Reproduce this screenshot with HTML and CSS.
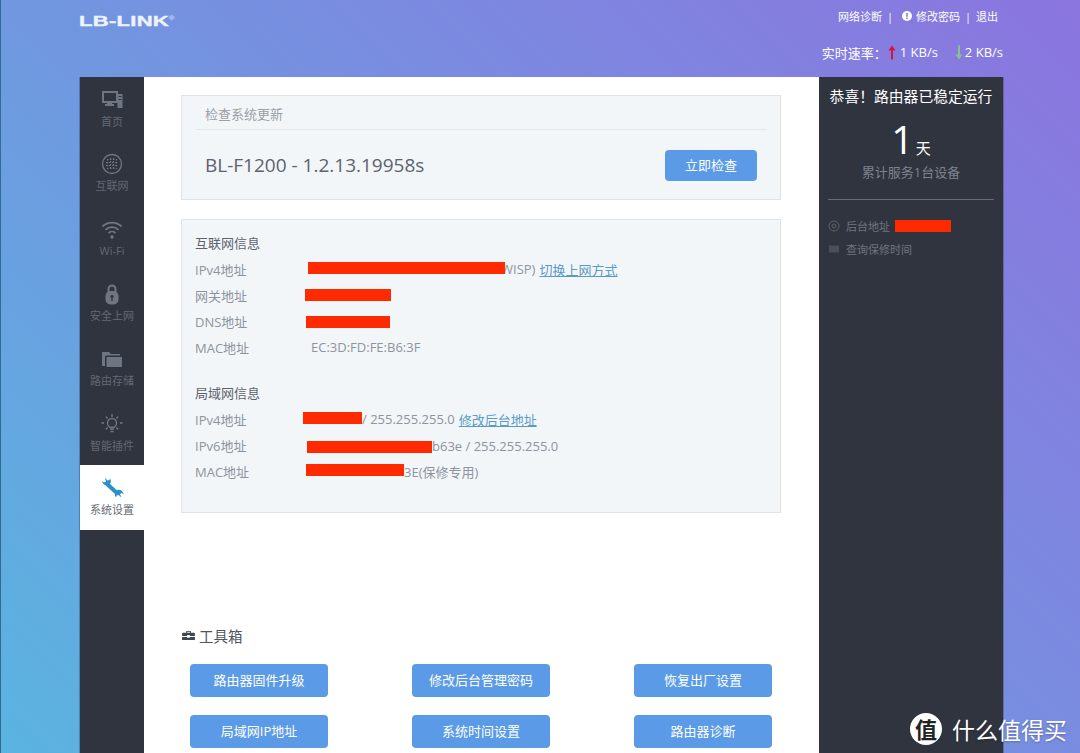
FILE: index.html
```html
<!DOCTYPE html>
<html lang="zh-CN">
<head>
    <meta charset="UTF-8">
    <title>LB-LINK</title>
    <link rel="stylesheet" href="styles.css">
</head>
<body>
    <div class="page">
        <!-- Шапка -->
        <header class="header">
            <div class="logo">LB-LINK<sup>®</sup></div>
            <div class="header-right">
                <div class="top-links">
                    <span>网络诊断</span><span class="sep">|</span>
                    <svg class="info-icon" viewBox="0 0 10 10"><circle cx="5" cy="5" r="5" fill="#fff"/><rect x="4.2" y="2" width="1.6" height="3.8" fill="#7f80e0"/><rect x="4.2" y="6.6" width="1.6" height="1.5" fill="#7f80e0"/></svg>
                    <span>修改密码</span><span class="sep">|</span>
                    <span>退出</span>
                </div>
                <div class="speed">
                    <span class="speed-label">实时速率：</span>
                    <svg class="arrow" viewBox="0 0 8 14"><path d="M4 0L7.5 5H5V14H3V5H.5z" fill="#d6123f"/></svg>
                    <span>1 KB/s</span>
                    <svg class="arrow arrow-down" viewBox="0 0 8 14"><path d="M4 14L7.5 9H5V0H3V9H.5z" fill="#86c48c"/></svg>
                    <span>2 KB/s</span>
                </div>
            </div>
        </header>

        <div class="frame">
            <!-- Левое меню -->
            <nav class="sidebar">
                <a class="nav-item">
                    <svg class="nav-icon" viewBox="0 0 24 24"><path d="M3 4h14v10H3z" fill="none" stroke="currentColor" stroke-width="2"/><path d="M7 14h5v2h2v2H5v-2h2z" fill="currentColor"/><path d="M17.500 6h5v14h-5z" fill="currentColor"/><path d="M18.500 8h3v1h-3zM18.500 11h3v1h-3z" fill="#30343f"/></svg>
                    <span>首页</span>
                </a>
                <a class="nav-item">
                    <svg class="nav-icon" viewBox="0 0 24 24"><circle cx="12" cy="12" r="9.500" fill="none" stroke="currentColor" stroke-width="1.300"/><path d="M7 7.500h10M6 10.500h12M6 13.500h12M7 16.500h10M7.500 7v10M10.500 6v12M13.500 6v12M16.500 7v10" stroke="currentColor" stroke-width="1.200" stroke-dasharray="1.500 1.500" fill="none"/></svg>
                    <span>互联网</span>
                </a>
                <a class="nav-item">
                    <svg class="nav-icon" viewBox="0 0 24 24"><path d="M2.500 9.500a13.500 13.500 0 0 1 19 0M5.500 12.800a9.300 9.300 0 0 1 13 0M8.500 16a5 5 0 0 1 7 0" fill="none" stroke="currentColor" stroke-width="1.800"/><circle cx="12" cy="20" r="1.800" fill="currentColor"/></svg>
                    <span>Wi-Fi</span>
                </a>
                <a class="nav-item">
                    <svg class="nav-icon" viewBox="0 0 24 24"><path d="M8.500 10V7a3.500 3.500 0 0 1 7 0v3" fill="none" stroke="currentColor" stroke-width="2"/><rect x="5.500" y="9" width="13" height="13.500" rx="5" fill="currentColor"/><circle cx="12" cy="14.500" r="1.600" fill="#30343f"/><rect x="11.300" y="15" width="1.400" height="4" fill="#30343f"/></svg>
                    <span>安全上网</span>
                </a>
                <a class="nav-item">
                    <svg class="nav-icon" viewBox="0 0 24 24"><path d="M2 19V5h7l2 2h9v1.500H6.500a1.500 1.500 0 0 0-1.500 1.500v9z" fill="currentColor"/><path d="M6.500 10H22v10H6.500z" fill="currentColor"/></svg>
                    <span>路由存储</span>
                </a>
                <a class="nav-item">
                    <svg class="nav-icon" viewBox="0 0 24 24"><circle cx="12" cy="11" r="4.500" fill="none" stroke="currentColor" stroke-width="1.400"/><path d="M10 17h4M10.500 19.500h3M12 2v3M4 11H1.500M22.500 11H20M5.800 4.800l1.800 1.800M18.200 4.800l-1.800 1.800M5.800 17.200l1.800-1.800M18.200 17.200l-1.800-1.800" stroke="currentColor" stroke-width="1.400" fill="none"/></svg>
                    <span>智能插件</span>
                </a>
                <a class="nav-item active">
                    <svg class="nav-icon" viewBox="0 0 24 24"><path d="M7 8l10.500 9.500" stroke="currentColor" stroke-width="4" fill="none"/><path d="M5 1.500l2.500 3 2-.5 .5-1.500c1.500 2.500 1 6-2 7-3 .5-5.500-2-6-4.500l2 1.500 2-1z" fill="currentColor"/><path d="M21.500 21.500l-3-2.500-2 .5-.5 2c-1.800-2.300-1.500-6 1.500-7.500 3-.8 5.500 1.500 6.300 4.500l-2-1.500-1.800 1z" fill="currentColor"/></svg>
                    <span>系统设置</span>
                </a>
            </nav>

            <!-- Основная часть -->
            <main class="content">
                <section class="card update-card">
                    <div class="update-title">检查系统更新</div>
                    <div class="update-row">
                        <span class="version">BL-F1200 - 1.2.13.19958s</span>
                        <button class="btn check-btn">立即检查</button>
                    </div>
                </section>

                <section class="card info-card">
                    <h3 class="info-head">互联网信息</h3>
                    <div class="info-row">
                        <span class="info-label">IPv4地址</span>
                        <span class="redact r1"></span><span>WISP)</span><a class="link">切换上网方式</a>
                    </div>
                    <div class="info-row">
                        <span class="info-label">网关地址</span>
                        <span class="redact r2"></span>
                    </div>
                    <div class="info-row">
                        <span class="info-label">DNS地址</span>
                        <span class="redact r3"></span>
                    </div>
                    <div class="info-row">
                        <span class="info-label">MAC地址</span>
                        <span class="mac">EC:3D:FD:FE:B6:3F</span>
                    </div>

                    <h3 class="info-head lan-head">局域网信息</h3>
                    <div class="info-row">
                        <span class="info-label">IPv4地址</span>
                        <span class="redact r4"></span><span>/ 255.255.255.0</span><a class="link">修改后台地址</a>
                    </div>
                    <div class="info-row">
                        <span class="info-label">IPv6地址</span>
                        <span class="redact r5"></span><span>b63e / 255.255.255.0</span>
                    </div>
                    <div class="info-row">
                        <span class="info-label">MAC地址</span>
                        <span class="redact r6"></span><span>3E(保修专用)</span>
                    </div>
                </section>

                <h3 class="tools-head">
                    <svg class="tools-icon" viewBox="0 0 14 12"><path d="M4.500 3V1h5v2H13a1 1 0 0 1 1 1v2.500H8.500v-1h-3v1H0V4a1 1 0 0 1 1-1zM5.500 2v1h3V2zM0 7.500h5.500v1h3v-1H14V11H0z" fill="#3f4650"/></svg>
                    工具箱
                </h3>
                <div class="tools">
                    <button class="btn">路由器固件升级</button>
                    <button class="btn">修改后台管理密码</button>
                    <button class="btn">恢复出厂设置</button>
                    <button class="btn">局域网IP地址</button>
                    <button class="btn">系统时间设置</button>
                    <button class="btn">路由器诊断</button>
                </div>
            </main>

            <!-- Правая панель -->
            <aside class="status">
                <div class="status-title">恭喜！路由器已稳定运行</div>
                <div class="days"><b>1</b><span>天</span></div>
                <div class="served">累计服务1台设备</div>
                <div class="status-links">
                    <div class="status-row">
                        <svg class="status-icon" viewBox="0 0 12 12"><circle cx="6" cy="6" r="5" fill="none" stroke="currentColor"/><circle cx="6" cy="6" r="2" fill="none" stroke="currentColor"/></svg>
                        <span>后台地址</span><span class="redact r7"></span>
                    </div>
                    <div class="status-row">
                        <svg class="status-icon" viewBox="0 0 12 12"><rect x="1" y="2.500" width="10" height="7" fill="currentColor" opacity=".6"/></svg>
                        <span>查询保修时间</span>
                    </div>
                </div>
            </aside>
        </div>

        <!-- Водяной знак поверх страницы -->
        <div class="watermark"><span class="wm-circle">值</span>什么值得买</div>
    </div>
</body>
</html>
```

FILE: styles.css
```css
* {
    box-sizing: border-box;
}

html, body {
    margin: 0;
    height: 100%;
    overflow: hidden;
}

body {
    font-family: "Open Sans", "Noto Sans CJK SC", sans-serif;
    font-size: 13px;
    color: #8d949d;
}

.page {
    position: relative;
    height: 753px;
    padding: 0 77px 0 79px;
    display: flex;
    flex-direction: column;
    border-left: 1px solid #2f6b94;
    background: linear-gradient(45deg, #5ab4e0 0%, #7592e0 50%, #8b75df 100%);
}

/* Шапка */
.header {
    height: 77px;
    display: flex;
    justify-content: space-between;
    color: #fff;
}

.logo {
    margin-top: 11px;
    margin-left: -1px;
    font-family: "Liberation Sans", sans-serif;
    font-size: 15.5px;
    font-weight: 700;
    line-height: 20px;
    letter-spacing: .2px;
    color: #eef3fa;
    -webkit-text-stroke: .4px #eef3fa;
    transform: scaleX(1.42);
    transform-origin: left;
}

.logo sup {
    font-size: 5px;
    font-weight: 400;
    line-height: 0;
    -webkit-text-stroke: 0;
}

.header-right {
    display: flex;
    flex-direction: column;
    align-items: flex-end;
}

.top-links {
    display: flex;
    align-items: center;
    height: 16px;
    margin-top: 8px;
    padding-right: 5px;
    font-size: 11px;
}

.sep {
    margin: 0 5px;
}

.sep + .info-icon {
    margin-left: 4px;
}

.info-icon {
    width: 10px;
    height: 10px;
    margin-right: 4px;
}

.speed {
    display: flex;
    align-items: center;
    height: 18px;
    margin-top: 19px;
    font-size: 13px;
}

.speed-label {
    margin-right: 1px;
}

.arrow {
    width: 8px;
    height: 15px;
    margin-right: 4px;
}

.arrow-down {
    margin-left: 17px;
    margin-right: 2px;
}

/* Рамка с тремя колонками */
.frame {
    flex: 1;
    display: flex;
    min-height: 0;
    background: #fff;
    box-shadow: 1px 0 0 rgba(70,70,90,.45), -1px 0 0 rgba(50,80,120,.45);
}

.sidebar {
    width: 64px;
    height: 100%;
    background: #30343f;
}

.nav-item {
    height: 65px;
    display: flex;
    flex-direction: column;
    align-items: center;
    justify-content: center;
    color: #6f7682;
    font-size: 11px;
    line-height: 15px;
}

.nav-item span {
    color: #626874;
}

.nav-item:first-child {
    height: 63px;
}

.nav-icon {
    width: 24px;
    height: 24px;
    margin-bottom: 2px;
}

.nav-item.active {
    padding-bottom: 2px;
    background: #fff;
    color: #2a90c8;
}

.nav-item.active span {
    color: #666c75;
}

.content {
    width: 675px;
    padding: 18px 38px 0 37px;
}

.card {
    border: 1px solid #dfe3e8;
    background: #f3f6f9;
}

.update-card {
    height: 105px;
    padding: 0 13px 0 14px;
}

.update-title {
    height: 34px;
    padding: 8px 9px 0;
    border-bottom: 1px solid #e3e6ea;
    font-size: 13px;
    line-height: 20px;
    color: #9a9fa6;
}

.update-row {
    display: flex;
    justify-content: space-between;
    padding: 20px 10px 0 9px;
}

.version {
    margin-top: 3px;
    font-size: 19px;
    line-height: 25px;
    color: #5c636d;
}

.btn {
    height: 33px;
    padding: 0 0 2px;
    border: 0;
    border-radius: 4px;
    background: #5a9ae6;
    color: #fff;
    font-family: inherit;
    font-size: 13px;
}

.check-btn {
    width: 92px;
    height: 31px;
}

.info-card {
    height: 294px;
    margin-top: 19px;
    padding: 12px 14px 0 13px;
}

.info-head {
    margin: 0;
    height: 24px;
    font-size: 13px;
    font-weight: 400;
    line-height: 22px;
    color: #5c636d;
}

.lan-head {
    margin-top: 22px;
}

.info-row {
    display: flex;
    align-items: center;
    height: 26.1px;
    color: #8d949d;
    white-space: nowrap;
}

.info-label {
    width: 111px;
    flex: none;
}

.link {
    margin-left: 4px;
    color: #5a9bc4;
    text-decoration: underline;
}

.mac {
    margin-left: 5px;
}

.redact {
    position: relative;
    display: inline-block;
    height: 12px;
    flex: none;
    background: #ff2a00;
}

.r1 { width: 197px; margin: 0 -4px 2px 2px; }
.r2 { width: 86px; margin: 0 0 1px -1px; }
.r3 { width: 84px; margin: 2px 0 0; }
.r4 { width: 59px; margin: 0 0 3px -3px; }
.r5 { width: 125px; margin: 2px 0 0 1px; }
.r6 { width: 98px; margin: 0 0 3px 0; }
.r7 { width: 56px; margin-left: 5px; }

.tools-head {
    display: flex;
    align-items: center;
    margin: 112px 0 0 1px;
    height: 20px;
    font-size: 14.5px;
    font-weight: 400;
    color: #4f5660;
}

.tools-icon {
    width: 13px;
    height: 11px;
    margin-right: 4px;
}

.tools {
    display: grid;
    grid-template-columns: repeat(3, 138px);
    grid-auto-rows: 33px;
    column-gap: 84px;
    row-gap: 18px;
    margin: 19px 0 0 9px;
}

/* Правая панель */
.status {
    width: 184px;
    padding: 0 9px;
    background: #30343f;
    color: #fff;
}

.status-title {
    margin-top: 8px;
    font-size: 14.8px;
    line-height: 22px;
    text-align: center;
    white-space: nowrap;
}

.days {
    height: 44px;
    margin-top: 10px;
    display: flex;
    justify-content: center;
    align-items: flex-end;
}

.days b {
    font-size: 39px;
    font-weight: 400;
    line-height: 44px;
}

.days span {
    font-size: 15px;
    line-height: 26px;
    margin-left: 2px;
}

.served {
    height: 39px;
    font-size: 13px;
    line-height: 22px;
    text-align: center;
    color: #7d838d;
    border-bottom: 1px solid #666b75;
}

.status-links {
    padding-top: 14px;
}

.status-row {
    display: flex;
    align-items: center;
    height: 23px;
    font-size: 11px;
    color: #6f7580;
}

.status-icon {
    width: 12px;
    height: 12px;
    margin-right: 6px;
    color: #5c626d;
}

/* Водяной знак */
.watermark {
    position: absolute;
    left: 909px;
    top: 707px;
    display: flex;
    align-items: center;
    height: 44px;
    font-size: 23px;
    color: #fff;
    white-space: nowrap;
    text-shadow: 0 1px 2px rgba(0,0,0,.25);
}

.wm-circle {
    width: 32px;
    height: 32px;
    margin-right: 10px;
    border-radius: 50%;
    background: #fff;
    color: #222;
    font-size: 22px;
    font-weight: 700;
    line-height: 32px;
    text-align: center;
    text-shadow: none;
}
```
